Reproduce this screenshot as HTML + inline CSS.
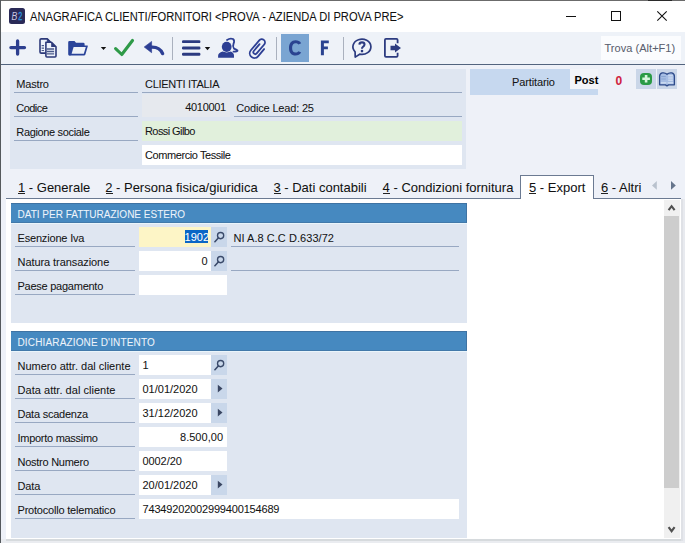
<!DOCTYPE html>
<html><head><meta charset="utf-8">
<style>
*{margin:0;padding:0;box-sizing:border-box}
html,body{width:685px;height:543px;overflow:hidden;background:#eef1f8;font-family:"Liberation Sans",sans-serif;color:#141414}
.a{position:absolute}
.t{position:absolute;white-space:pre;-webkit-text-stroke:0.05px currentColor}
svg{position:absolute;overflow:visible}
</style></head><body>
<div class="a" style="left:0px;top:0px;width:685px;height:1px;background:#6b6b6b;"></div>
<div class="a" style="left:648px;top:0px;width:24px;height:1px;background:#2a2a2a;"></div>
<div class="a" style="left:0px;top:0px;width:1px;height:543px;background:#55595d;"></div>
<div class="a" style="left:1px;top:1px;width:684px;height:31px;background:#fff;"></div>
<svg style="left:9px;top:8px" width="16" height="16"><rect x="0" y="0" width="16" height="16" rx="2.5" fill="#2a2a57"/><text x="2.4" y="11.8" font-family="Liberation Sans" font-size="10" font-style="italic" fill="#c9c6e0" textLength="5.8" lengthAdjust="spacingAndGlyphs">B</text><text x="9.2" y="11.8" font-family="Liberation Sans" font-size="10" fill="#2a9ae0" stroke="#2a9ae0" stroke-width="0.35" textLength="3.9" lengthAdjust="spacingAndGlyphs">2</text></svg>
<div class="t" style="left:30px;top:11.24px;font-size:12px;line-height:12px;color:#111;transform:scaleX(0.929);transform-origin:0 0;-webkit-text-stroke:0.05px #111;">ANAGRAFICA CLIENTI/FORNITORI &lt;PROVA - AZIENDA DI PROVA PRE&gt;</div>
<div class="a" style="left:566px;top:16px;width:10px;height:1px;background:#111;"></div>
<div class="a" style="left:611px;top:11px;width:10px;height:10px;border:1px solid #111"></div>
<svg style="left:657px;top:11px" width="10" height="10"><path d="M0.3 0.3L9.7 9.7M9.7 0.3L0.3 9.7" stroke="#111" stroke-width="1.1"/></svg>
<div class="a" style="left:1px;top:32px;width:684px;height:32px;background:#eef2f8;"></div>
<div class="a" style="left:1px;top:64px;width:684px;height:1px;background:#52647e;"></div>
<svg style="left:0;top:0" width="685" height="65"><path d="M17.6 40.9V54.1M10.9 47.6H24.5" stroke="#2d3f8f" stroke-width="3.3" stroke-linecap="round"/><path d="M40 40.1Q40 38.9 41.2 38.9H47.3L50.2 41.8V52Q50.2 53.1 49.1 53.1H41.2Q40 53.1 40 52Z" fill="#eef2fb" stroke="#2d3a7a" stroke-width="1.6" stroke-linejoin="round"/><path d="M47.3 38.9L50.2 41.8H47.3Z" fill="#2d3a7a" stroke="#2d3a7a" stroke-width="0.8"/><path d="M41.6 45.7H44M41.6 48.1H44M41.6 50.5H44" stroke="#4a5a8a" stroke-width="1.2"/><path d="M45.9 42.3H51.5L56 46.8V56Q56 57 55 57H46.9Q45.9 57 45.9 56Z" fill="#eef2fb" stroke="#2d3a7a" stroke-width="1.6" stroke-linejoin="round"/><path d="M51.2 42.3L56 47.1H51.2Z" fill="#2d3a7a"/><path d="M46.8 49H54.1M46.8 51.5H54.1M46.8 53.9H54.1" stroke="#4a5a8a" stroke-width="1.3"/><path d="M68.2 42.2Q68.2 40.9 69.5 40.9H74.5L76 42.7H83.2Q84.6 42.7 84.6 44.1V46H73L70.5 55.5H69.5Q68.2 55.5 68.2 54.2Z" fill="#2a449a"/><path d="M72.6 45.5H87.4Q88 45.5 87.8 46.2L85.4 54.4Q85.1 55.5 84 55.5H69.8Q68.9 55.5 69.2 54.6L71.6 46.3Q71.8 45.5 72.6 45.5Z" fill="#2a449a"/><path d="M73.6 46.9H85.8L83.8 53.8H71.6Z" fill="#eef2f8"/><path d="M100.8 46.9H106.2L103.5 50.1Z" fill="#111"/><path d="M115.6 48.6L121.8 54.5L132.5 40.5" fill="none" stroke="#2e9a48" stroke-width="3.1" stroke-linecap="round" stroke-linejoin="round"/><path d="M144.2 47L151.6 41.4V52.7Z" fill="#2d3f94" stroke="#2d3f94" stroke-width="0.6" stroke-linejoin="round"/><path d="M150 47.2Q159.5 46.2 162.6 53.6" fill="none" stroke="#2d3f94" stroke-width="3.4" stroke-linecap="round"/><rect x="172" y="37" width="1" height="23" fill="#aab1be"/><rect x="182" y="40.2" width="18.4" height="2.9" rx="1.2" fill="#2b3a80"/><rect x="182" y="46.5" width="18.4" height="2.9" rx="1.2" fill="#2b3a80"/><rect x="182" y="52.8" width="18.4" height="2.9" rx="1.2" fill="#2b3a80"/><path d="M204.8 47H210.2L207.5 50.3Z" fill="#111"/><path d="M227 40Q230 37.8 233 39Q235 40.5 233.5 44Q232.3 46.5 234 48.6Q236.5 49.6 237.5 50.4Q237.8 51.6 233.5 51.6" fill="none" stroke="#2d3f94" stroke-width="1.8" stroke-linecap="round"/><ellipse cx="226.7" cy="46.8" rx="4.9" ry="5.1" fill="#2d3f94"/><path d="M218.1 57.7V55.8Q218.2 52.8 222.6 51.6Q224.5 52.4 226.7 52.4Q228.9 52.4 230.8 51.6Q234 52.8 234 55.8V57.7Z" fill="#2d3f94"/><g transform="translate(257.8,47.9) rotate(40) scale(0.9)"><path d="M-1.2 -4.5V5.5A2.1 2.1 0 0 0 3 5.5V-7.5A3.6 3.6 0 0 0 -4.2 -7.5V7A5.2 5.2 0 0 0 6.2 7V-3.5" fill="none" stroke="#2d3f94" stroke-width="2" stroke-linecap="round"/></g><rect x="276" y="37" width="1" height="23" fill="#aab1be"/><rect x="281" y="34" width="28" height="28" fill="#7aa5d2"/><path d="M301.2 43.2C300 41.2 298 40.3 295.5 40.3C291.5 40.3 289 43.3 289 47.9C289 52.5 291.5 55.5 295.5 55.5C298 55.5 300 54.6 301.2 52.6L298.4 51.2C297.8 52.1 296.8 52.6 295.6 52.6C293.4 52.6 292.1 50.8 292.1 47.9C292.1 45 293.4 43.2 295.6 43.2C296.8 43.2 297.8 43.7 298.4 44.6Z" fill="#2a4390"/><path d="M320.9 40.6H328.8V43.3H323.9V46.6H327.9V49.2H323.9V55.2H320.9Z" fill="#2a4390"/><rect x="343" y="37" width="1" height="23" fill="#aab1be"/><path d="M355.1 51.8A9 7.6 0 1 1 359.7 54.2L355.2 57.1Z" fill="none" stroke="#2c3b80" stroke-width="1.7" stroke-linejoin="round"/><path d="M359.4 44.6Q359.5 42.4 362 42.4Q364.5 42.4 364.5 44.5Q364.5 45.9 362.9 46.8Q362 47.3 362 48.8" fill="none" stroke="#2c3b80" stroke-width="2.1"/><circle cx="362" cy="51.1" r="1.3" fill="#2c3b80"/><path d="M397.6 43.2V40Q397.6 38.9 396.5 38.9H386Q384.9 38.9 384.9 40V55.8Q384.9 56.9 386 56.9H396.5Q397.6 56.9 397.6 55.8V52.8" fill="none" stroke="#2c3b80" stroke-width="1.8"/><path d="M390.5 45.8H395V43.5L401 48L395 52.5V50.2H390.5Z" fill="#2c3b80"/></svg>
<div class="a" style="left:601px;top:36px;width:80px;height:24px;background:#fbfcfe;"></div>
<div class="t" style="left:604.5px;top:42.89px;font-size:11px;line-height:11px;letter-spacing:0.038px;color:#5a5e6e;">Trova (Alt+F1)</div>
<div class="a" style="left:10px;top:69px;width:456px;height:100px;background:#dfe6f1;"></div>
<div class="t" style="left:16.3px;top:78.69px;font-size:11px;line-height:11px;letter-spacing:-0.185px;">Mastro</div>
<div class="a" style="left:14px;top:92px;width:124px;height:1px;background:#98a8c2;"></div>
<div class="t" style="left:145px;top:78.69px;font-size:11px;line-height:11px;letter-spacing:-0.273px;">CLIENTI ITALIA</div>
<div class="a" style="left:142px;top:92px;width:320px;height:1px;background:#98a8c2;"></div>
<div class="t" style="left:16.3px;top:102.69px;font-size:11px;line-height:11px;letter-spacing:-0.550px;">Codice</div>
<div class="a" style="left:14px;top:116px;width:124px;height:1px;background:#98a8c2;"></div>
<div class="a" style="left:142px;top:94px;width:88px;height:23px;background:#e6e9ee;"></div>
<div class="t" style="left:185.2px;top:101.69px;font-size:11px;line-height:11px;letter-spacing:-0.305px;">4010001</div>
<div class="t" style="left:236.3px;top:102.69px;font-size:11px;line-height:11px;letter-spacing:-0.173px;">Codice Lead: 25</div>
<div class="a" style="left:234px;top:116px;width:228px;height:1px;background:#98a8c2;"></div>
<div class="t" style="left:16.3px;top:126.69px;font-size:11px;line-height:11px;letter-spacing:-0.342px;">Ragione sociale</div>
<div class="a" style="left:14px;top:140px;width:124px;height:1px;background:#98a8c2;"></div>
<div class="a" style="left:142px;top:121px;width:320px;height:20px;background:#e1f0dc;"></div>
<div class="t" style="left:145px;top:125.69px;font-size:11px;line-height:11px;letter-spacing:-0.575px;">Rossi Gilbo</div>
<div class="a" style="left:142px;top:145px;width:320px;height:20px;background:#fff;"></div>
<div class="t" style="left:145px;top:149.89px;font-size:11px;line-height:11px;letter-spacing:-0.420px;">Commercio Tessile</div>
<div class="a" style="left:470px;top:69px;width:100px;height:26px;background:#c6d8ef;"></div>
<div class="a" style="left:570px;top:89px;width:28px;height:6px;background:#c6d8ef;"></div>
<div class="a" style="left:570px;top:69px;width:28px;height:20px;background:#f2f4f9;"></div>
<div class="t" style="left:512px;top:76.69px;font-size:11px;line-height:11px;letter-spacing:-0.115px;">Partitario</div>
<div class="t" style="left:574.5px;top:75.19px;font-size:11px;line-height:11px;color:#000;font-weight:bold;">Post</div>
<div class="t" style="left:615.5px;top:75.34px;font-size:12px;line-height:12px;color:#d0213f;font-weight:bold;">0</div>
<div class="a" style="left:636px;top:69px;width:20px;height:20px;background:#cad6e8;"></div>
<div class="a" style="left:657px;top:69px;width:20px;height:20px;background:#cad6e8;"></div>
<svg style="left:0;top:0" width="685" height="100"><rect x="640" y="72.9" width="12" height="12" rx="4" fill="#2a9a45"/><path d="M642.3 78.8H649.9M646.1 75V82.6" stroke="#d6f5dc" stroke-width="2.6"/><path d="M659.6 84.8V76.2Q659.6 73.6 662.2 72.9Q665 72.4 667 74.2Q669 72.4 671.8 72.9Q674.4 73.6 674.4 76.2V84.8H668.6Q667.6 85.8 667 85.8Q666.4 85.8 665.4 84.8Z" fill="#a6bde3" stroke="#2d4a8a" stroke-width="1.3" stroke-linejoin="round"/><path d="M660.8 82.9H666.4M667.6 82.9H673.2" stroke="#e8f0fb" stroke-width="0.9"/><path d="M668.2 75.8H672.8M668.2 78H672.8M668.2 80.2H672.8" stroke="#dfe9f7" stroke-width="0.9"/><path d="M661.2 76.5H665.8M661.2 79H665.8" stroke="#8aa6d2" stroke-width="1"/></svg>
<div class="a" style="left:520px;top:175px;width:74px;height:25px;background:#fff;border:1px solid #6b7a92;border-bottom:none"></div>
<div class="t" style="left:18px;top:180.70px;font-size:13px;line-height:13px;color:#111;">1 - Generale</div>
<div class="a" style="left:18.3px;top:193px;width:7px;height:1px;background:#222;"></div>
<div class="t" style="left:105.2px;top:180.70px;font-size:13px;line-height:13px;color:#111;">2 - Persona fisica/giuridica</div>
<div class="a" style="left:105.5px;top:193px;width:7px;height:1px;background:#222;"></div>
<div class="t" style="left:273.4px;top:180.70px;font-size:13px;line-height:13px;color:#111;">3 - Dati contabili</div>
<div class="a" style="left:273.7px;top:193px;width:7px;height:1px;background:#222;"></div>
<div class="t" style="left:382.6px;top:180.70px;font-size:13px;line-height:13px;color:#111;">4 - Condizioni fornitura</div>
<div class="a" style="left:382.90000000000003px;top:193px;width:7px;height:1px;background:#222;"></div>
<div class="t" style="left:529px;top:180.70px;font-size:13px;line-height:13px;color:#111;">5 - Export</div>
<div class="a" style="left:529.3px;top:193px;width:7px;height:1px;background:#222;"></div>
<div class="t" style="left:601px;top:180.70px;font-size:13px;line-height:13px;color:#111;">6 - Altri</div>
<div class="a" style="left:601.3px;top:193px;width:7px;height:1px;background:#222;"></div>
<div class="a" style="left:6px;top:198px;width:514px;height:1px;background:#6b7a92;"></div>
<div class="a" style="left:594px;top:198px;width:87px;height:1px;background:#6b7a92;"></div>
<svg style="left:0;top:0" width="685" height="200"><path d="M656.8 181L652 185.4L656.8 189.8Z" fill="#b9c2ce"/><path d="M671 181L675.8 185.4L671 189.8Z" fill="#66758c"/></svg>
<div class="a" style="left:6px;top:199px;width:675px;height:340px;background:#fff;"></div>
<div class="a" style="left:1px;top:539px;width:684px;height:4px;background:#eaecf0;"></div>
<div class="a" style="left:6px;top:539px;width:675px;height:2px;background:#d6dadd;"></div>
<div class="a" style="left:664px;top:200px;width:16px;height:338px;background:#f0f0f0;"></div>
<div class="a" style="left:681px;top:199px;width:2px;height:342px;background:#dfe1e6;"></div>
<div class="a" style="left:683px;top:199px;width:2px;height:342px;background:#e8eaef;"></div>
<div class="a" style="left:664px;top:216px;width:15px;height:272px;background:#cdcdcd;"></div>
<svg style="left:0;top:0" width="685" height="543"><path d="M668.6 210.2L671.6 206.2L674.6 210.2" fill="none" stroke="#505050" stroke-width="2.1"/><path d="M668.6 527.2L671.6 531.2L674.6 527.2" fill="none" stroke="#505050" stroke-width="2.1"/></svg>
<div class="a" style="left:11px;top:203px;width:456px;height:120px;background:#dfe6f1;"></div>
<div class="a" style="left:11px;top:203px;width:456px;height:20px;background:#4689c0;border-top:1px solid #3f73a3;border-right:1px solid #3f73a3;border-bottom:1px solid #4279aa"></div>
<div class="a" style="left:11px;top:223px;width:456px;height:1px;background:#eaf5fb;"></div>
<div class="t" style="left:17.5px;top:209.63px;font-size:10px;line-height:10px;color:#eef4fb;">DATI PER FATTURAZIONE ESTERO</div>
<div class="t" style="left:17.5px;top:232.69px;font-size:11px;line-height:11px;letter-spacing:-0.176px;">Esenzione Iva</div>
<div class="a" style="left:15px;top:246px;width:120px;height:1px;background:#98a8c2;"></div>
<div class="a" style="left:139px;top:227px;width:72px;height:20px;background:#fdf5c6;"></div>
<div class="a" style="left:184.6px;top:230px;width:23.2px;height:12.8px;background:#0a66c6;"></div>
<div class="t" style="left:184.6px;top:232.19px;font-size:11px;line-height:11px;color:#fff;">1902</div>
<div class="a" style="left:211px;top:227px;width:16px;height:20px;background:#c9d7ea;"></div>
<svg style="left:0;top:0" width="685" height="543"><path d="M214.9 241.7L218.3 238" stroke="#3a4a6a" stroke-width="1.6" stroke-linecap="round"/><circle cx="220.6" cy="235.6" r="3.1" fill="none" stroke="#3a4a6a" stroke-width="1.35"/></svg>
<div class="t" style="left:233.4px;top:232.69px;font-size:11px;line-height:11px;letter-spacing:0.052px;">NI A.8 C.C D.633/72</div>
<div class="a" style="left:231px;top:246px;width:228px;height:1px;background:#98a8c2;"></div>
<div class="t" style="left:17.5px;top:256.69px;font-size:11px;line-height:11px;letter-spacing:-0.068px;">Natura transazione</div>
<div class="a" style="left:15px;top:270px;width:120px;height:1px;background:#98a8c2;"></div>
<div class="a" style="left:139px;top:251px;width:72px;height:20px;background:#fff;"></div>
<div class="t" style="left:201.5px;top:255.99px;font-size:11px;line-height:11px;">0</div>
<div class="a" style="left:211px;top:251px;width:16px;height:20px;background:#c9d7ea;"></div>
<svg style="left:0;top:0" width="685" height="543"><path d="M214.9 265.7L218.3 262" stroke="#3a4a6a" stroke-width="1.6" stroke-linecap="round"/><circle cx="220.6" cy="259.6" r="3.1" fill="none" stroke="#3a4a6a" stroke-width="1.35"/></svg>
<div class="a" style="left:231px;top:270px;width:228px;height:1px;background:#98a8c2;"></div>
<div class="t" style="left:17.5px;top:280.69px;font-size:11px;line-height:11px;letter-spacing:-0.250px;">Paese pagamento</div>
<div class="a" style="left:15px;top:294px;width:120px;height:1px;background:#98a8c2;"></div>
<div class="a" style="left:139px;top:275px;width:88px;height:20px;background:#fff;"></div>
<div class="a" style="left:11px;top:331px;width:456px;height:207px;background:#dfe6f1;"></div>
<div class="a" style="left:11px;top:331px;width:456px;height:20px;background:#4689c0;border-top:1px solid #3f73a3;border-right:1px solid #3f73a3;border-bottom:1px solid #4279aa"></div>
<div class="a" style="left:11px;top:351px;width:456px;height:1px;background:#eaf5fb;"></div>
<div class="t" style="left:17.5px;top:338.14px;font-size:10px;line-height:10px;color:#eef4fb;letter-spacing:0.15px;">DICHIARAZIONE D'INTENTO</div>
<div class="t" style="left:17.5px;top:360.69px;font-size:11px;line-height:11px;letter-spacing:-0.005px;">Numero attr. dal cliente</div>
<div class="a" style="left:15px;top:374px;width:120px;height:1px;background:#98a8c2;"></div>
<div class="a" style="left:139px;top:355px;width:72px;height:20px;background:#fff;"></div>
<div class="t" style="left:142.5px;top:359.99px;font-size:11px;line-height:11px;">1</div>
<div class="a" style="left:211px;top:355px;width:16px;height:20px;background:#c9d7ea;"></div>
<svg style="left:0;top:0" width="685" height="543"><path d="M214.9 369.7L218.3 366" stroke="#3a4a6a" stroke-width="1.6" stroke-linecap="round"/><circle cx="220.6" cy="363.6" r="3.1" fill="none" stroke="#3a4a6a" stroke-width="1.35"/></svg>
<div class="t" style="left:17.5px;top:384.69px;font-size:11px;line-height:11px;letter-spacing:0.036px;">Data attr. dal cliente</div>
<div class="a" style="left:15px;top:398px;width:120px;height:1px;background:#98a8c2;"></div>
<div class="a" style="left:139px;top:379px;width:72px;height:20px;background:#fff;"></div>
<div class="t" style="left:142.5px;top:383.99px;font-size:11px;line-height:11px;">01/01/2020</div>
<div class="a" style="left:211px;top:379px;width:16px;height:20px;background:#c9d7ea;"></div>
<svg style="left:0;top:0" width="685" height="543"><path d="M217.8 384.7L222.5 388.6L217.8 392.5Z" fill="#3a4662"/></svg>
<div class="t" style="left:17.5px;top:408.69px;font-size:11px;line-height:11px;letter-spacing:-0.233px;">Data scadenza</div>
<div class="a" style="left:15px;top:422px;width:120px;height:1px;background:#98a8c2;"></div>
<div class="a" style="left:139px;top:403px;width:72px;height:20px;background:#fff;"></div>
<div class="t" style="left:142.5px;top:407.99px;font-size:11px;line-height:11px;">31/12/2020</div>
<div class="a" style="left:211px;top:403px;width:16px;height:20px;background:#c9d7ea;"></div>
<svg style="left:0;top:0" width="685" height="543"><path d="M217.8 408.7L222.5 412.6L217.8 416.5Z" fill="#3a4662"/></svg>
<div class="t" style="left:17.5px;top:432.69px;font-size:11px;line-height:11px;letter-spacing:-0.276px;">Importo massimo</div>
<div class="a" style="left:15px;top:446px;width:120px;height:1px;background:#98a8c2;"></div>
<div class="a" style="left:139px;top:427px;width:88px;height:20px;background:#fff;"></div>
<div class="t" style="left:180px;top:431.99px;font-size:11px;line-height:11px;letter-spacing:0.025px;">8.500,00</div>
<div class="t" style="left:17.5px;top:456.69px;font-size:11px;line-height:11px;letter-spacing:-0.257px;">Nostro Numero</div>
<div class="a" style="left:15px;top:470px;width:120px;height:1px;background:#98a8c2;"></div>
<div class="a" style="left:139px;top:451px;width:88px;height:20px;background:#fff;"></div>
<div class="t" style="left:142.5px;top:455.99px;font-size:11px;line-height:11px;letter-spacing:-0.078px;">0002/20</div>
<div class="t" style="left:17.5px;top:480.69px;font-size:11px;line-height:11px;letter-spacing:-0.150px;">Data</div>
<div class="a" style="left:15px;top:494px;width:120px;height:1px;background:#98a8c2;"></div>
<div class="a" style="left:139px;top:475px;width:72px;height:20px;background:#fff;"></div>
<div class="t" style="left:142.5px;top:479.99px;font-size:11px;line-height:11px;">20/01/2020</div>
<div class="a" style="left:211px;top:475px;width:16px;height:20px;background:#c9d7ea;"></div>
<svg style="left:0;top:0" width="685" height="543"><path d="M217.8 480.7L222.5 484.6L217.8 488.5Z" fill="#3a4662"/></svg>
<div class="t" style="left:17.5px;top:504.69px;font-size:11px;line-height:11px;letter-spacing:-0.205px;">Protocollo telematico</div>
<div class="a" style="left:15px;top:518px;width:120px;height:1px;background:#98a8c2;"></div>
<div class="a" style="left:139px;top:499px;width:320px;height:20px;background:#fff;"></div>
<div class="t" style="left:142.5px;top:503.99px;font-size:11px;line-height:11px;letter-spacing:-0.169px;">74349202002999400154689</div>
</body></html>
